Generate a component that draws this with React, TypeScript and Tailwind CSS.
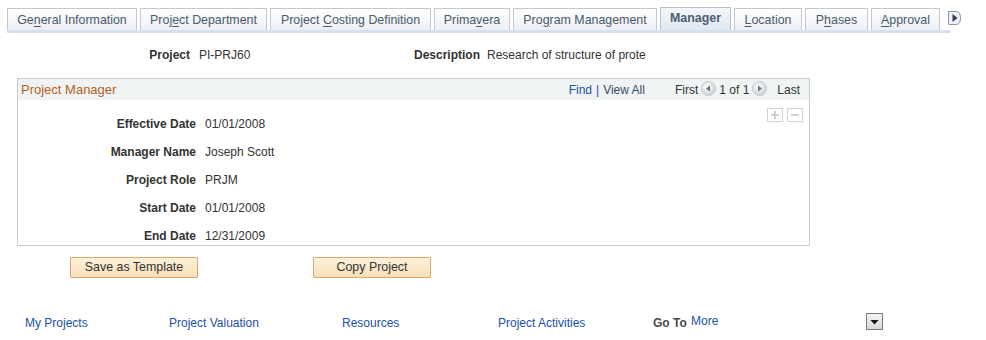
import React from "react";

const font = { fontFamily: '"Liberation Sans", Arial, sans-serif' };

function U({ children }: { children: React.ReactNode }) {
  return <span className="underline underline-offset-2">{children}</span>;
}

const tabs: { w: string; label: React.ReactNode; active?: boolean }[] = [
  { w: "w-[130px]", label: <>Ge<U>n</U>eral Information</> },
  { w: "w-[127px]", label: <>Proj<U>e</U>ct Department</> },
  { w: "w-[161px]", label: <>Project <U>C</U>osting Definition</> },
  { w: "w-[76px]", label: <>Prima<U>v</U>era</> },
  { w: "w-[144px]", label: <>Pro<U>g</U>ram Management</> },
  { w: "w-[71px]", label: <>Manager</>, active: true },
  { w: "w-[68px]", label: <><U>L</U>ocation</> },
  { w: "w-[63px]", label: <>P<U>h</U>ases</> },
  { w: "w-[69px]", label: <><U>A</U>pproval</> },
];

function NavCircle({ dir }: { dir: "l" | "r" }) {
  return (
    <svg width="15" height="15" viewBox="0 0 15 15" className="mx-[3px] -mt-[3px]">
      <defs>
        <radialGradient id={"g" + dir} cx="40%" cy="35%" r="70%">
          <stop offset="0%" stopColor="#ffffff" />
          <stop offset="100%" stopColor="#c9ccd0" />
        </radialGradient>
      </defs>
      <circle cx="7.5" cy="7.5" r="7" fill={`url(#g${dir})`} stroke="#c4c7cb" />
      {dir === "l" ? (
        <path d="M5 7.5 L9 4.5 L9 10.5 Z" fill="#6b6f74" />
      ) : (
        <path d="M10 7.5 L6 4.5 L6 10.5 Z" fill="#6b6f74" />
      )}
    </svg>
  );
}

const rows = [
  ["Effective Date", "01/01/2008"],
  ["Manager Name", "Joseph Scott"],
  ["Project Role", "PRJM"],
  ["Start Date", "01/01/2008"],
  ["End Date", "12/31/2009"],
];

export default function App() {
  return (
    <div style={font} className="w-[986px] h-[340px] bg-white text-[12px] text-[#333] overflow-hidden">
      {/* Tabs */}
      <div className="pt-[7px] pl-[7px]">
        <div className="flex items-end">
          {tabs.map((t, i) => (
            <div
              key={i}
              className={`${t.w} mr-[3px] flex items-center justify-center border border-b-0 ${
                t.active
                  ? "h-[23px] border-[#b8c3cf] bg-gradient-to-b from-[#f4f7fb] to-[#dfe7f1] font-bold text-[#4d5d70]"
                  : "h-[22px] border-[#c3c9cf] bg-gradient-to-b from-white to-[#eceff3] text-[#4a5a6c]"
              } text-[12.4px]`}
            >
              <span className={t.active ? "-mt-[1px]" : "mt-[1px]"}>{t.label}</span>
            </div>
          ))}
          <div className="self-start mt-[4px] ml-[5px]">
            <svg width="13" height="14" viewBox="0 0 13 14">
              <path d="M0.5 0.5 H8 Q12.5 0.5 12.5 7 Q12.5 13.5 8 13.5 H0.5 Z" fill="#eef2f8" stroke="#8a96a6" />
              <path d="M4.5 3 L9.5 7 L4.5 11 Z" fill="#2e3e58" />
            </svg>
          </div>
        </div>
        <div className="w-[943px] h-[3px] bg-[#d5e0ee]" />
      </div>

      {/* Project row */}
      <div className="flex items-center mt-[15px] h-[14px]">
        <div className="w-[190px] text-right font-bold text-[#333]">Project</div>
        <div className="ml-[9px] w-[215px]">PI-PRJ60</div>
        <div className="w-[65px] text-right font-bold">Description</div>
        <div className="ml-[8px]">Research of structure of prote</div>
      </div>

      {/* Box */}
      <div className="ml-[17px] mt-[16px] w-[793px] h-[168px] border border-[#c8cdd3]">
        <div className="h-[21px] bg-[#f0f3f4] flex items-center">
          <div className="pl-[3px] text-[13px] text-[#b45f22] flex-1">Project Manager</div>
          <div className="flex items-center text-[12px] pr-[9px] mt-[1px]">
            <span className="text-[#1f4fa8]">Find</span>
            <span className="mx-[4px] text-[#1f4fa8]">|</span>
            <span className="text-[#3a4a5e]">View All</span>
            <span className="ml-[30px] text-[#333]">First</span>
            <NavCircle dir="l" />
            <span>1 of 1</span>
            <NavCircle dir="r" />
            <span className="ml-[7px]">Last</span>
          </div>
        </div>
        <div className="relative">
          <div className="absolute right-[6px] top-[8px] flex gap-[4px]">
            <div className="w-[16px] h-[14px] border border-[#cfd2d6] flex items-center justify-center">
              <svg width="10" height="10" viewBox="0 0 10 10">
                <path d="M5 1 V9 M1 5 H9" stroke="#c3c6ca" strokeWidth="1.6" />
              </svg>
            </div>
            <div className="w-[16px] h-[14px] border border-[#cfd2d6] flex items-center justify-center">
              <svg width="10" height="10" viewBox="0 0 10 10">
                <path d="M1 5 H9" stroke="#c3c6ca" strokeWidth="1.6" />
              </svg>
            </div>
          </div>
          <div className="pt-[17px] flex flex-col gap-[14px]">
            {rows.map(([l, v]) => (
              <div key={l} className="flex items-center h-[14px]">
                <div className="w-[178px] text-right font-bold text-[#333]">{l}</div>
                <div className="ml-[9px]">{v}</div>
              </div>
            ))}
          </div>
        </div>
      </div>

      {/* Buttons */}
      <div className="flex mt-[11px]">
        <button className="ml-[70px] w-[128px] h-[21px] border border-[#e0a569] bg-gradient-to-b from-[#fdf1dc] to-[#f9dfb7] text-[12.4px] text-[#333] rounded-[1px]">
          Save as Template
        </button>
        <button className="ml-[115px] w-[118px] h-[21px] border border-[#e0a569] bg-gradient-to-b from-[#fdf1dc] to-[#f9dfb7] text-[12.4px] text-[#333] rounded-[1px]">
          Copy Project
        </button>
      </div>

      {/* Bottom links */}
      <div className="flex items-center mt-[36px] h-[18px]">
        <div className="ml-[25px] w-[144px] text-[#2050a8]">My Projects</div>
        <div className="w-[173px] text-[#2050a8]">Project Valuation</div>
        <div className="w-[156px] text-[#2050a8]">Resources</div>
        <div className="w-[155px] text-[#2050a8]">Project Activities</div>
        <div className="font-bold text-[#4a4a4a] w-[38px]">Go To</div>
        <div className="text-[#2050a8] -mt-[4px] w-[175px]">More</div>
        <div className="-mt-[3px] w-[17px] h-[17px] border border-[#7a7a7a] bg-gradient-to-b from-[#f4f4f4] to-[#d8d8d8] flex items-center justify-center">
          <svg width="9" height="6" viewBox="0 0 9 6">
            <path d="M0.5 1 H8.5 L4.5 5.5 Z" fill="#111" />
          </svg>
        </div>
      </div>
    </div>
  );
}
